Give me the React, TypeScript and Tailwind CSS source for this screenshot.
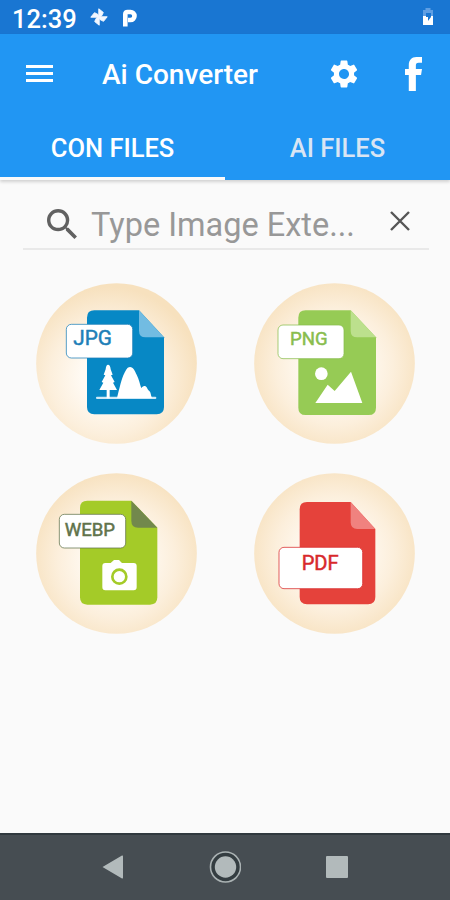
import { useState } from "react";
import type { ReactNode } from "react";

interface Format {
  name: string;
  color: string;
  fold: string;
  sheet: { x: number; y: number; w: number; h: number; foldX: number };
  label: { x: number; y: number; w: number; h: number };
  text: { x: number; y: number; size: number; width: number; color: string; weight: number };
  glow: [number, number];
  art?: ReactNode;
}

const formats: Format[] = [
  {
    name: "JPG",
    color: "#0788c5",
    fold: "#72bce2",
    sheet: { x: 153, y: 82, w: 231, h: 312, foldX: 309 },
    label: { x: 91, y: 124, w: 199, h: 101 },
    text: { x: 112, y: 185, size: 61, width: 116, color: "#1e7fb8", weight: 400 },
    glow: [0.45, 0.58],
    art: (
      <>
        <rect x="180" y="341" width="181" height="7" rx="3" fill="#cfe9f7" />
        <path d="M216 245q7 0 8 14l6 16-5 2 11 20-5 2 12 22h-22v25h-9v-25h-22l12-22-5-2 11-20-5-2 6-16q1-14 7-14z" fill="#fff" />
        <path d="M243 345c8-30 14-60 22-74 5-10 9-19 17-19 10 0 15 13 20 23 7 14 10 29 14 41 3-7 11-10 16-3 3 5 4 9 8 11 5 4 4 13 8 21z" fill="#fff" />
      </>
    ),
  },
  {
    name: "PNG",
    color: "#96cb55",
    fold: "#bce08d",
    sheet: { x: 133, y: 82, w: 233, h: 314, foldX: 290 },
    label: { x: 72, y: 126, w: 198, h: 101 },
    text: { x: 108, y: 187, size: 55, width: 113, color: "#89bd4d", weight: 400 },
    glow: [0.5, 0.52],
    art: (
      <>
        <circle cx="202" cy="272" r="19" fill="#fff" />
        <path d="M184 360l37-55 21 19 49-58 34 94z" fill="#fff" />
      </>
    ),
  },
  {
    name: "WEBP",
    color: "#a4cb28",
    fold: "#72884c",
    sheet: { x: 132, y: 83, w: 232, h: 312, foldX: 286 },
    label: { x: 70, y: 124, w: 199, h: 101 },
    text: { x: 86, y: 188, size: 54, width: 151, color: "#61734b", weight: 400 },
    glow: [0.5, 0.54],
    art: (
      <>
        <path d="M208 270h16l10-9h15l9 9h35q9 0 9 9v64q0 9-9 9h-85q-9 0-9-9v-64q0-9 9-9z" fill="#fff" />
        <circle cx="250" cy="311" r="21" fill="none" stroke="#a4cb28" strokeWidth="8" />
      </>
    ),
  },
  {
    name: "PDF",
    color: "#e5423b",
    fold: "#f0827f",
    sheet: { x: 137, y: 87, w: 227, h: 307, foldX: 290 },
    label: { x: 75, y: 223, w: 251, h: 124 },
    text: { x: 143, y: 291, size: 59, width: 111, color: "#d8292b", weight: 400 },
    glow: [0.5, 0.5],
  },
];

function FormatBadge({ format }: { format: Format }) {
  const { name, color, fold, sheet, label, text, glow, art } = format;
  const right = sheet.x + sheet.w;
  const bottom = sheet.y + sheet.h;
  const foldY = sheet.y + 81;

  return (
    <button className="size-[161px]" aria-label={`Convert to ${name}`}>
      <svg viewBox="0 0 483 483" className="size-full">
        <radialGradient id={`glow-${name}`} cx={glow[0]} cy={glow[1]} r="0.56">
          <stop offset="0.3" stopColor="#fffaf3" />
          <stop offset="0.65" stopColor="#fcefdc" />
          <stop offset="1" stopColor="#f7e1be" />
        </radialGradient>
        <circle cx="241.500" cy="241.500" r="241" fill={`url(#glow-${name})`} />
        <path
          d={`M${sheet.x + 22} ${sheet.y}H${sheet.foldX}L${right} ${foldY}V${bottom - 22}q0 22-22 22H${sheet.x + 22}q-22 0-22-22V${sheet.y + 22}q0-22 22-22z`}
          fill={color}
        />
        <path d={`M${sheet.foldX} ${sheet.y}L${right} ${foldY}H${sheet.foldX + 20}q-20 0-20-20z`} fill={fold} />
        {art}
        <rect x={label.x} y={label.y} width={label.w} height={label.h} rx="15" fill="#fff" stroke={text.color} strokeWidth="3" strokeOpacity="0.75" />
        <text
          x={text.x}
          y={text.y}
          fontSize={text.size}
          fontWeight={text.weight}
          fill={text.color}
          stroke={text.color}
          strokeWidth="1.500"
          textLength={text.width}
          lengthAdjust="spacingAndGlyphs"
        >
          {name}
        </text>
      </svg>
    </button>
  );
}

function StatusBar() {
  return (
    <div className="flex h-[34px] items-center bg-[#1976d2] pl-3 pr-4 text-white">
      <span className="w-[78px] pt-1.5 text-[25.500px] leading-none font-medium">12:39</span>
      {/* pinwheel */}
      <svg viewBox="0 0 18 18" className="size-[18px]" fill="#f2f7ff">
        <path d="M8.800 8.800V.8L13.300 4.500 11.500 8zM9.200 8.800h8L13.500 13.300 10 11.500zM9.200 9.200v8L4.700 13.500 6.500 10zM8.800 9.200h-8L4.500 4.700 8 6.500z" stroke="#f2f7ff" strokeWidth="1" strokeLinejoin="round" />
      </svg>
      <svg viewBox="0 0 16 18" className="mt-0.5 ml-[14px] h-[18px] w-4" fill="none">
        <path d="M3.300 17.500V5Q3.300 3 5.500 3H8.500a3.900 3.900 0 0 1 0 8H6" stroke="#fff" strokeWidth="4.600" />
      </svg>
      <svg viewBox="0 0 12 20" className="ml-auto h-5 w-3">
        <path d="M3.500 1h5v2H11v7H1V3h2.500z" fill="#5f9fe4" />
        <path d="M1 9h10v9H1z" fill="#fff" />
        <path d="M4 6h5v4L6 14V10H4z" fill="#1976d2" />
      </svg>
    </div>
  );
}

function Toolbar() {
  return (
    <div className="flex h-[80px] items-center pl-[26px] pr-[28px] text-white">
      <button className="mb-px flex w-[27px] flex-col gap-[3.500px]" aria-label="Menu">
        <span className="h-[3.500px] bg-white" />
        <span className="h-[3.500px] bg-white" />
        <span className="h-[3.500px] bg-white" />
      </button>
      <h1 className="ml-[49px] pt-0.5 text-[28px] leading-none font-medium whitespace-nowrap">Ai Converter</h1>
      <button className="ml-auto" aria-label="Settings">
        <svg viewBox="2 2 20 20" className="h-[28px] w-[28px]" fill="currentColor">
          <path d="M19.140 12.940c.04-.3.060-.61.060-.94s-.02-.64-.07-.94l2.030-1.580a.49.490 0 0 0 .12-.61l-1.920-3.320a.488.488 0 0 0-.59-.22l-2.390.96c-.5-.38-1.030-.7-1.620-.94l-.36-2.540a.484.484 0 0 0-.48-.41h-3.840c-.24 0-.43.17-.47.41l-.36 2.540c-.59.24-1.130.57-1.620.94l-2.390-.96c-.22-.08-.47 0-.59.22L2.740 8.870c-.12.21-.08.47.12.61l2.030 1.580c-.05.3-.09.63-.09.94s.02.64.07.94l-2.030 1.580a.49.490 0 0 0-.12.610l1.920 3.320c.12.22.37.29.59.22l2.390-.96c.5.38 1.030.7 1.620.94l.36 2.540c.05.24.24.41.48.41h3.840c.24 0 .44-.17.47-.41l.36-2.540c.59-.24 1.130-.56 1.620-.94l2.390.96c.22.08.47 0 .59-.22l1.920-3.320c.12-.22.07-.47-.12-.61zM12 15.600A3.610 3.610 0 0 1 8.400 12c0-1.980 1.620-3.600 3.600-3.600s3.600 1.620 3.600 3.600-1.620 3.600-3.600 3.600z" />
        </svg>
      </button>
      <button className="ml-[47px]" aria-label="Facebook">
        <svg viewBox="0 0 18 34" className="h-[34px] w-[17px]" preserveAspectRatio="none" fill="currentColor">
          <path d="M4 34V18H0v-6h4V8.500C4 3 7 0 12 0h6v5.800h-3.600C12 5.800 11.500 7 11.500 8.700V12H18l-1 6h-5.500v16z" />
        </svg>
      </button>
    </div>
  );
}

export default function App() {
  const [tab, setTab] = useState(0);
  const [query, setQuery] = useState("");

  return (
    <div className="flex h-[900px] w-[450px] flex-col bg-[#fafafa] font-['Roboto',sans-serif]">
      <StatusBar />

      <header className="h-[146px] bg-[#2196f3] shadow-[0_2px_3px_rgba(0,0,0,0.16)]">
        <Toolbar />
        <div className="grid h-[66px] grid-cols-2 text-[25.500px] font-medium">
          {["CON FILES", "AI FILES"].map((title, i) => (
            <button
              key={title}
              onClick={() => setTab(i)}
              className={`border-b-[3px] pt-[5px] whitespace-nowrap ${
                tab === i ? "border-[#fafafa] text-white" : "border-transparent text-[#d9e5f3]"
              }`}
            >
              {title}
            </button>
          ))}
        </div>
      </header>

      <main className="flex-1">
        {/* Search */}
        <div className="mt-3 ml-[23px] flex h-[58px] w-[406px] items-center border-b-2 border-[#e9e9e9]">
          <svg viewBox="3 3 17.500 17.500" className="mt-2 ml-6 size-[30px] shrink-0" fill="#616161">
            <path d="M15.500 14h-.79l-.28-.27A6.471 6.471 0 0 0 16 9.500 6.500 6.500 0 1 0 9.500 16c1.610 0 3.090-.59 4.230-1.570l.27.28v.79l5 4.990L20.490 19l-4.990-5zm-6 0C7.010 14 5 11.990 5 9.500S7.010 5 9.500 5 14 7.010 14 9.500 11.990 14 9.500 14z" />
          </svg>
          <input
            type="text"
            value={query}
            onChange={(e) => setQuery(e.target.value)}
            placeholder="Type Image Exte..."
            className="ml-[14px] w-[280px] bg-transparent pt-[9px] text-[32.500px] leading-10 text-gray-700 outline-none placeholder:text-[#989898]"
          />
          <button onClick={() => setQuery("")} className="ml-[19px] shrink-0 pt-0.5" aria-label="Clear">
            <svg viewBox="0 0 20 20" className="size-5" stroke="#555" strokeWidth="2.400">
              <path d="M1 1l18 18M19 1L1 19" />
            </svg>
          </button>
        </div>

        {/* Formats */}
        <div className="mt-[33px] ml-[35.500px] grid w-[379px] grid-cols-[161px_161px] justify-between gap-y-[29px]">
          {formats.map((format) => (
            <FormatBadge key={format.name} format={format} />
          ))}
        </div>
      </main>

      <nav className="flex h-[67px] items-center border-t-2 border-[#30393e] bg-[#464d52] pb-0.5 pl-[102px]">
        <svg viewBox="0 0 21 24" className="h-6 w-[21px]" fill="#b2babb">
          <path d="M0.500 12L20 .6q1-.6 1 .8v21.200q0 1.400-1 .8z" />
        </svg>
        <svg viewBox="0 0 32 32" className="ml-[86px] size-8">
          <circle cx="16.500" cy="16" r="15" fill="#343d41" stroke="#aab2b3" strokeWidth="1.600" />
          <circle cx="16.500" cy="16" r="10.700" fill="#b2babb" />
        </svg>
        <div className="ml-[84.500px] size-[22px] rounded-[1px] bg-[#b2babb]" />
      </nav>
    </div>
  );
}
